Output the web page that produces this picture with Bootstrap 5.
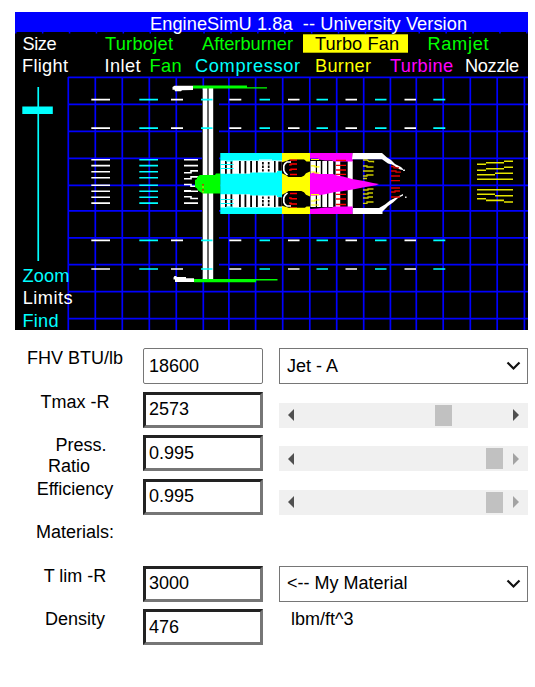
<!DOCTYPE html>
<html lang="en">
<head>
<meta charset="utf-8">
<meta name="viewport" content="width=device-width, initial-scale=1">
<title>EngineSimU 1.8a</title>
<link rel="stylesheet" href="https://cdn.jsdelivr.net/npm/bootstrap@5.3.0/dist/css/bootstrap.min.css">
<style>
body{font-family:"Liberation Sans",Arial,sans-serif;font-size:18px;line-height:21px;color:#000;overflow:hidden}
.sim-page{padding:12px 7px 0 15px}
.sim-view{width:513px;height:318px}
.sim-view text{font-family:"Liberation Sans",Arial,sans-serif;font-size:18.2px}
.sim-form{padding-top:18px}
.sim-row{height:43.5px}
.sim-label{width:120px}
.sim-value{width:120px;margin-left:8px}
.sim-control{width:249px;margin-left:16px}
.sim-value .form-control{height:36px;font-size:18px;line-height:21px;color:#000;border-width:3px;border-style:solid;border-color:#222 #767676 #767676 #222;border-radius:0;padding:0 3px}
.sim-value .form-control.thin{border:1px solid #767676;border-radius:2px;padding:0 5px}
.sim-control .form-select{height:36px;font-size:18px;line-height:21px;color:#000;border:1px solid #767676;border-radius:0;padding:0 30px 0 7px;background-image:none}
.sim-arrow{right:7px;top:13px;pointer-events:none}
.sim-bar{height:25px;margin-top:11px;background:#f0f0f0;padding:0 9px;color:#505050}
.sim-track{height:21px;margin:0 9px 0 10px}
.sim-thumb{width:17px;height:21px;background:#c1c1c1}
.sim-off{color:#a3a3a3}
.sim-lead{padding-left:12px}
.sim-tail{padding-right:12px}
</style>
</head>
<body class="bg-white">
<main class="sim-page">
<svg class="sim-view d-block" viewBox="15 12 513 318" role="img" aria-label="Turbo fan engine">
<rect x="15" y="12" width="513" height="318" fill="#000"/>
<!-- grid -->
<path stroke="#00f" stroke-width="1.7" fill="none" d="M68.3 77V330M95.3 77V330M122.3 77V330M149.3 77V330M176.3 77V330M203.3 77V330M228.9 77V330M255.6 77V330M282.7 77V330M309.8 77V330M336.7 77V330M363.7 77V330M390.4 77V330M416.3 77V330M443.2 77V330M470.3 77V330M497.2 77V330M524.4 77V330M68 77.3H528M68 104.3H528M68 131.3H528M68 158.3H528M68 185.3H528M68 210.8H528M68 237.8H528M68 264.7H528M68 291.7H528M68 318.6H528"/>
<path stroke="#00f" stroke-width="1.6" d="M15 32.6H528" stroke-dasharray="1.5 25.4"/>
<rect x="15" y="12" width="513" height="20" fill="#00f"/>
<!-- menus -->
<rect x="303" y="34.3" width="105" height="18.4" fill="#ff0"/>
<g fill="#fff">
<text x="150" y="29.7" textLength="317" xml:space="preserve">EngineSimU 1.8a&#160; -- University Version</text>
<text x="22.5" y="49.6" textLength="34">Size</text><text x="22" y="71.7" textLength="46">Flight</text>
<text x="104.5" y="71.7" textLength="36">Inlet</text><text x="465" y="71.7" textLength="54">Nozzle</text>
<text x="22.7" y="304.4" textLength="50">Limits</text>
</g>
<g fill="#0f0"><text x="105" y="49.6" textLength="68">Turbojet</text><text x="202" y="49.6" textLength="91">Afterburner</text><text x="427.5" y="49.6" textLength="61">Ramjet</text><text x="149.5" y="71.7" textLength="32">Fan</text></g>
<text x="315" y="49.6" textLength="84" fill="#000">Turbo Fan</text>
<g fill="#0ff"><text x="195" y="71.7" textLength="105">Compressor</text><text x="22.5" y="281.8" textLength="47">Zoom</text><text x="22.5" y="326.7" textLength="36">Find</text></g>
<text x="315" y="71.7" textLength="56" fill="#ff0">Burner</text>
<text x="390" y="71.7" textLength="63" fill="#f0f">Turbine</text>
<!-- zoom slider -->
<path fill="#0ff" d="M37.4 87h1.7v174h-1.7zM22.3 106.4h30.5v7.6H22.3z"/>
<!-- fan duct -->
<path fill="#000" d="M202 90h17v188h-17z"/>
<path fill="#fff" d="M202.7 88h4.7v191h-4.7zM208.6 88h4.6v191h-4.6z"/>
<path fill="#fff" d="M172.5 87l2-1.3H193v4.3l-11 .3-1 1h-6l-.5-1.5h-2zM173.5 277.5l1-1.5h2v1h9.5v1.3h8v3.7h-19v-2.5h-1.5z"/>
<path fill="#0f0" d="M193 85.6h54v1.6h20v1.3H193zM194 279h83.5v1.4H256v1.8h-62z"/>
<!-- free stream -->
<g stroke-width="1.6" fill="none">
<path stroke="#fff" d="M91.3 99.6H110M91.3 128.1H110M91.3 159.7H110M91.3 165.6H110M91.3 171.7H110M91.3 177.7H110M91.3 185.2H110M91.3 191.2H110M91.3 197.2H110M91.3 203.1H110M91.3 240.4H110M91.3 269H110"/>
<path stroke="#0ff" d="M139.3 99.6H158M139.3 128.1H158M139.3 159.7H158M139.3 165.6H158M139.3 171.7H158M139.3 177.7H158M139.3 185.2H158M139.3 191.2H158M139.3 197.2H158M139.3 203.1H158M139.3 240.4H158M139.3 269H158"/>
<g id="bypass"><path stroke="#fff" d="M171 99.6h12M229.3 99.6h12M288 99.6h11.5M345.5 99.6h11.5M404.5 99.6h11.5"/><path stroke="#0ff" d="M201 99.6h11.5M259.5 99.6h10.5M316.5 99.6h11.5M375 99.6h11.5M433.3 99.6h12"/></g>
<use href="#bypass" y="28.5"/><use href="#bypass" y="140.8"/><use href="#bypass" y="169.4"/>
<path stroke="#fff" d="M184 159.7h14M184 165.6h14M184 172.7h7v-1.8h7M184 178.7h7v-1.8h7M184 184.5h7v1.8h7M184 191.2h14M184 197.2h0M184 190.7h7M184 196.7h7v1.8h7M184 203.1h14"/>
</g>
<!-- spinner and compressor -->
<path fill="#0f0" d="M195 180l2-1v-2l3-2h15l1-1.5h4.5V193.5H203l-5-3-1-2-2-1.5z"/>
<path stroke="#f00" stroke-width="1.4" d="M203 184v1.5M203 189v1.5"/><path stroke="#fc0" d="M203 186v2M203 191v1.5"/>
<path fill="#0ff" d="M220.3 153H282v61h-61.7z"/>
<g id="blades">
<path fill="#fff" d="M220.7 160.5H282V171h-5v1.5h-27v1.3h-29.3z"/>
<path fill="#000" d="M225 161h1.8v12.8H225zM230.5 161h1.8v12.8h-1.8zM239 161h1.8v12.5H239zM244.5 161h1.8v12.5h-1.8zM250.2 161h1.8v11.5h-1.8zM256 161h1.8v11.5H256zM274 161h1.6v11.5H274zM278.3 161.5h3.5v9.3h-3.5z"/>
<path stroke="#000" stroke-width="1.7" stroke-dasharray="2.4 1.2" d="M262.9 162v10.5M268.7 162v10.5"/>
<path stroke="#0ff" stroke-width="1" d="M220.5 164.5h13M220.5 168.5h13M226 161h7"/>
</g>
<use href="#blades" transform="matrix(1 0 0 -1 0 368)"/>
<path stroke="#fff" d="M259 160h13"/>
<!-- burner -->
<path fill="#ff0" d="M282 153h28v61h-28z"/>
<g id="can"><path fill="#000" d="M282 162.2l5-1.5 3-1.5h14l2.5 2.3h3.5v10l-4 1.8-2 2.5-2.7 1.2H288.5l-2.5-1.8-4-2z"/>
<path fill="none" stroke="#fff" stroke-width="1.6" d="M291 162h-4l-2.2 1.8-1 2v4.4l1.2 2.5 2.5 2.3"/>
<path stroke="#f00" stroke-width="1.4" fill="none" d="M290 160h7M289 164.9h2v-.9h6M289 170h2v-.8h6M290 174.5h7"/></g>
<use href="#can" transform="matrix(1 0 0 -1 0 368)"/>
<path fill="#ff0" d="M283 153h27v6.3h-27zM283 207.8h27v6.2h-27z"/>
<!-- turbine -->
<path fill="#000" d="M310 160h43v48h-43z"/>
<path fill="#fff" d="M310.5 161h5.3v46h-5.3zM317 161h3.8v46H317zM322.3 161h4.7v46h-4.7zM328.4 161h4.8v46h-4.8zM335.6 161h4.6v46h-4.6zM347.7 161h5v47h-5z"/>
<path fill="#f0f" d="M310 153h42.7v8.5H334l-2-1h-7l-6-1-1-1h-8zM310 214h42.7v-7.5H334l-2 1h-7l-8 1-7 .5zM310 174l4-2 5 2h14l4 1.5 6 1 9 2.5 12 2 9 2 6 1-3 1.2-12 2-10 2-12 2-8 1-9 2-10 1.5h-5z"/>
<path stroke="#ff0" stroke-width="1.2" fill="none" d="M311 159.5h8M311 165.8h4v1h4.5M311 172h4v1h4.5M311 194.6h8M311 201h4v-1h4.5M311 205h8"/>
<path stroke="#f00" stroke-width="1.3" d="M336 160.3h10M336 165.3h10M336 170h10M336 174.3h10M336 194.3h10M336 199h10M336 204.5h10"/>
<!-- nozzle -->
<path fill="#fff" d="M352.7 153H382l5 4.5 4 2.5 4 4 6 3 2 2v1l-3-.5-8-5-4-1-6-4.3h-30zM352.7 208H379l6-3.5 5-4 10-5 3-1.5v1.5l-5 2.5-5 4.5-5 3.5-5.5 5.5v2.5h-29.8z"/>
<path fill="#ddd" d="M403 169.5h2v1.5h-2zM405 196.5h1.6v1.5H405z"/>
<path stroke="#ff0" stroke-opacity=".8" stroke-width="1.3" fill="none" d="M363 160h4l2 1.5h4.5v1M363 166h4v1h6.5M363 171h10.5M363 176h4v-1h6.5M363 178.5h4M363 190h5v-1h5.5M363 194h5v-1h5M363 198h5v-1h5M363 203.3h4v-1.3h6.5"/>
<path stroke="#d00" stroke-width="1.3" fill="none" d="M391 166.5h3v1.4h5M391 171h5v1.2h5M391 176h9M391 180.7h9M391 188h9M391 192h4v-1h5M391 197h9"/>
<path stroke="#ff0" stroke-opacity=".9" stroke-width="1.6" d="M477 164.2h9M486 162.8h18M504 161.3h9M477 170.2h9M486 168.8h18M504 167.3h9M477 174.8h18M495 173.3h18M477 179.2h36M477 189.8h36M477 194.3h18M495 195.7h18M477 198.8h9M486 200.4h18M504 202h9"/>
</svg>

<form class="sim-form">
<div class="sim-row d-flex"><label class="sim-label text-center">FHV BTU/lb</label><div class="sim-value"><input class="form-control thin" value="18600"></div><div class="sim-control position-relative"><select class="form-select"><option>Jet - A</option></select><svg class="sim-arrow position-absolute" width="15" height="10" viewBox="0 0 15 10"><path d="M1.5 1.5l6 6 6-6" fill="none" stroke="#111" stroke-width="2.2"/></svg></div></div>
<div class="sim-row d-flex"><label class="sim-label text-center">Tmax -R</label><div class="sim-value"><input class="form-control" value="2573"></div><div class="sim-control"><div class="sim-bar d-flex align-items-center"><svg width="6" height="12"><path d="M6 0v12L0 6z" fill="currentColor"/></svg><div class="sim-track flex-grow-1 d-flex"><div class="sim-thumb" style="margin-left:131px"></div></div><svg width="6" height="12"><path d="M0 0v12l6-6z" fill="currentColor"/></svg></div></div></div>
<div class="sim-row d-flex"><label class="sim-label text-center"><span class="d-block sim-lead">Press.</span><span class="d-block sim-tail">Ratio</span></label><div class="sim-value"><input class="form-control" value="0.995"></div><div class="sim-control"><div class="sim-bar d-flex align-items-center"><svg width="6" height="12"><path d="M6 0v12L0 6z" fill="currentColor"/></svg><div class="sim-track flex-grow-1 d-flex"><div class="sim-thumb" style="margin-left:182px"></div></div><svg class="sim-off" width="6" height="12"><path d="M0 0v12l6-6z" fill="currentColor"/></svg></div></div></div>
<div class="sim-row d-flex"><label class="sim-label text-center">Efficiency</label><div class="sim-value"><input class="form-control" value="0.995"></div><div class="sim-control"><div class="sim-bar d-flex align-items-center"><svg width="6" height="12"><path d="M6 0v12L0 6z" fill="currentColor"/></svg><div class="sim-track flex-grow-1 d-flex"><div class="sim-thumb" style="margin-left:182px"></div></div><svg class="sim-off" width="6" height="12"><path d="M0 0v12l6-6z" fill="currentColor"/></svg></div></div></div>
<div class="sim-row d-flex"><div class="sim-label text-center">Materials:</div></div>
<div class="sim-row d-flex"><label class="sim-label text-center">T lim -R</label><div class="sim-value"><input class="form-control" value="3000"></div><div class="sim-control position-relative"><select class="form-select"><option>&lt;-- My Material</option></select><svg class="sim-arrow position-absolute" width="15" height="10" viewBox="0 0 15 10"><path d="M1.5 1.5l6 6 6-6" fill="none" stroke="#111" stroke-width="2.2"/></svg></div></div>
<div class="sim-row d-flex"><label class="sim-label text-center">Density</label><div class="sim-value"><input class="form-control" value="476"></div><div class="sim-control ps-2"><span class="ms-1">lbm/ft^3</span></div></div>
</form>
</main>
<script src="https://cdn.jsdelivr.net/npm/bootstrap@5.3.0/dist/js/bootstrap.bundle.min.js"></script>
</body>
</html>
